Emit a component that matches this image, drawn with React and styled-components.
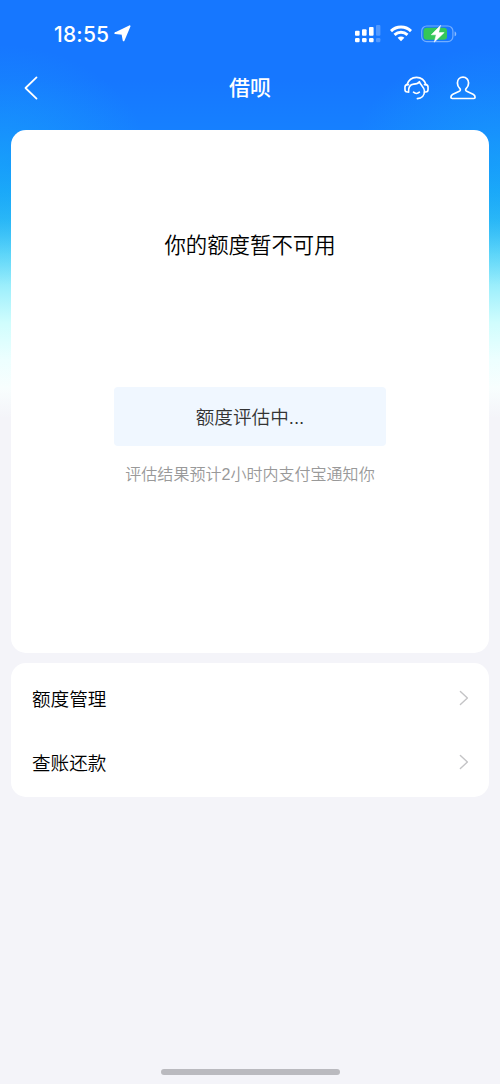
import React from 'react';
import styled, {createGlobalStyle} from 'styled-components';

const GlobalStyle = createGlobalStyle`
  * {
    box-sizing: border-box;
  }

  body {
    margin: 0;
    background: #f4f4f9;
    font-family: 'Liberation Sans', 'Noto Sans CJK SC', sans-serif;
  }
`;

const Screen = styled.div`
  display: flex;
  flex-direction: column;
  height: 1084px;
  overflow: hidden;
  background:
    radial-gradient(ellipse 150px 120px at 0 165px, rgba(24, 168, 250, 0.6), rgba(24, 160, 255, 0)) no-repeat,
    radial-gradient(ellipse 150px 120px at 500px 165px, rgba(24, 168, 250, 0.6), rgba(24, 160, 255, 0)) no-repeat,
    linear-gradient(
      #1677ff 0,
      #1677ff 80px,
      #1680ff 130px,
      #168ffb 165px,
      #1ca8f8 190px,
      #32bef5 220px,
      #6bdef9 255px,
      #a2f0fc 290px,
      #d0fdfd 323px,
      #edffff 360px,
      #f8fefe 388px,
      #f4f4f9 418px
    );
`;

const StatusBar = styled.div`
  display: flex;
  flex: none;
  align-items: center;
  justify-content: space-between;
  height: 67px;
  padding: 0 43px 0 54px;
  color: #fff;
`;

const StatusGroup = styled.div`
  display: flex;
  align-items: center;
  gap: ${({$gap}) => $gap}px;
`;

const Clock = styled.span`
  padding-top: 2px;
  font-family: Inter, sans-serif;
  font-size: 21px;
  font-weight: 500;
  line-height: 26px;
  letter-spacing: 0.2px;
`;

const Icon = styled.svg`
  display: block;
  flex: none;
  fill: none;
  stroke-linecap: round;
  stroke-linejoin: round;
`;

const NavBar = styled.header`
  display: grid;
  flex: none;
  grid-template-columns: 1fr auto 1fr;
  align-items: center;
  height: 42px;
  margin-bottom: 21px;
  padding: 0 24px;
  color: #fff;
`;

const NavTitle = styled.h1`
  margin: 0;
  font-size: 21px;
  font-weight: 500;
  line-height: 30px;
`;

const NavActions = styled.div`
  display: flex;
  justify-content: flex-end;
  gap: 21px;
`;

const Card = styled.section`
  flex: none;
  margin: 0 11px 10px;
  border-radius: 15px;
  background: #fff;
`;

const QuotaCard = styled(Card)`
  display: flex;
  flex-direction: column;
  align-items: center;
  height: 523px;
  padding-top: 99px;
`;

const QuotaTitle = styled.h2`
  margin: 0;
  color: #000;
  font-size: 21.4px;
  font-weight: 350;
  line-height: 34px;
`;

const QuotaButton = styled.button`
  width: 272px;
  height: 59px;
  margin: 124px 0 14px;
  padding: 0 0 2px;
  border: 0;
  border-radius: 4px;
  background: #f0f7ff;
  color: #333;
  font-family: inherit;
  font-size: 18.6px;
  font-weight: 350;
`;

const QuotaHint = styled.p`
  margin: 0;
  color: #999;
  font-size: 16.05px;
  font-weight: 350;
  line-height: 28px;
`;

const MenuCard = styled(Card)`
  height: 134px;
  padding: 3px 20px 0 21px;
`;

const MenuRow = styled.div`
  display: flex;
  align-items: center;
  justify-content: space-between;
  height: 64px;
  color: #000;
  font-size: 18.6px;
  font-weight: 350;
`;

const MenuLabel = styled.span`
  padding-bottom: 2px;
`;

const HomeIndicator = styled.div`
  flex: none;
  align-self: center;
  width: 179px;
  height: 6px;
  margin: auto 0 9px;
  border-radius: 3px;
  background: #bababf;
`;

const LocationIcon = () => <Icon width='17' height='17' viewBox='0 0 17 17'>
  <path d='M15.6 1.2 9.6 15.3 8.4 8.9 1.2 8.2Z' fill='#fff' stroke='#fff' strokeWidth='1.8'/>
</Icon>;

const SignalIcon = () => <Icon width='26' height='18' viewBox='0 0 26 18'>
  <g fill='#fff'>
    <rect x='0' y='5.8' width='4.6' height='5' rx='1'/>
    <rect x='7' y='4.3' width='4.6' height='6.5' rx='1'/>
    <rect x='14' y='2.1' width='4.6' height='8.7' rx='1'/>
    <rect x='0' y='13' width='4.6' height='4.2' rx='1.2'/>
    <rect x='7' y='13' width='4.6' height='4.2' rx='1.2'/>
    <rect x='14' y='13' width='4.6' height='4.2' rx='1.2'/>
  </g>
  <g fill='#fff' opacity='.25'>
    <rect x='21' y='0' width='4.4' height='10.8' rx='1'/>
    <rect x='21' y='13' width='4.4' height='4.2' rx='1.2'/>
  </g>
</Icon>;

const WifiIcon = () => <Icon width='22' height='17' viewBox='0 0 22 17'>
  <g stroke='#fff' strokeWidth='2.9' strokeLinecap='butt'>
    <path d='M1 6.1C6.6.7 15.4.7 21 6.1'/>
    <path d='M4.5 9.9C8.3 6.3 13.7 6.3 17.5 9.9'/>
  </g>
  <path d='M7.6 12.8C9.6 11 12.4 11 14.4 12.8L11 16.2Z' fill='#fff'/>
</Icon>;

const BatteryIcon = () => <Icon width='36' height='20' viewBox='0 0 36 20'>
  <rect x='.7' y='2' width='31.2' height='15.6' rx='5' stroke='#fff' strokeOpacity='.4' strokeWidth='1.2'/>
  <path d='M33.6 7.4c2.2.6 2.2 4.2 0 4.8Z' fill='#fff' fillOpacity='.5'/>
  <rect x='2.5' y='3.8' width='23.5' height='12' rx='3.3' fill='#34c759'/>
  <path
    d='M19.4 1.6 10.2 10.8h5l-2 7.4 10-9.6h-5.4Z'
    fill='#fff'
    stroke='#fff'
    strokeWidth='.5'
  />
</Icon>;

const BackIcon = () => <Icon width='14' height='24' viewBox='0 0 14 24'>
  <path d='M12.5 1.4 1.5 12l11 10.6' stroke='#fff' strokeWidth='1.8'/>
</Icon>;

const ServiceIcon = () => <Icon width='25' height='24' viewBox='0 0 26 24' preserveAspectRatio='none'>
  <g stroke='#fff' strokeWidth='1.7'>
    <path d='M3.2 8.6C4.7 4 8.5 1.3 13 1.3S21.3 4 22.8 8.6'/>
    <path d='M4.7 8.6H3.4C1.8 8.8 1 9.8 1 11.2v2.4c0 1.4.9 2.4 2.4 2.4h1.3'/>
    <path d='M21.3 8.6h1.3c1.6.2 2.4 1.2 2.4 2.6v2.4c0 1.4-.9 2.4-2.4 2.4h-1.3'/>
    <path d='M4.7 16c-.2-4.8 1.6-7.5 5.4-7.8 2.9-.2 4.6-.5 5.9-2.5.6 2.9 5 5 5.3 9.3 0 4.5-2.8 7.6-7.4 7.6'/>
    <path d='M9.9 16.2c1.7 1.5 4.4 1.5 6.1 0'/>
  </g>
</Icon>;

const UserIcon = () => <Icon width='26' height='24' viewBox='0 0 26 24'>
  <path
    d='M13 1.2c-3.3 0-5.6 2.4-5.6 5.7 0 2.4 1 4.3 2.5 5.7.8.8.5 2.2-.6 2.7l-6.4 2.9C1.5 18.9.9 20 .9 21.2c0 .8.5 1.3 1.3 1.3h21.6c.8 0 1.3-.5 1.3-1.3 0-1.2-.6-2.3-2-3l-6.4-2.9c-1.1-.5-1.4-1.9-.6-2.7 1.5-1.4 2.5-3.3 2.5-5.7 0-3.3-2.3-5.7-5.6-5.7Z'
    stroke='#fff'
    strokeWidth='1.7'
  />
</Icon>;

const ArrowIcon = () => <Icon width='10' height='16' viewBox='0 0 10 16'>
  <path d='M1.4 1.5 8.4 8l-7 6.5' stroke='#c4c4c6' strokeWidth='1.4'/>
</Icon>;

const menuItems = ['额度管理', '查账还款'];

const App = () => <>
  <GlobalStyle/>
  <Screen>
    <StatusBar>
      <StatusGroup $gap={5}>
        <Clock>18:55</Clock>
        <LocationIcon/>
      </StatusGroup>
      <StatusGroup $gap={9}>
        <SignalIcon/>
        <WifiIcon/>
        <BatteryIcon/>
      </StatusGroup>
    </StatusBar>
    <NavBar>
      <BackIcon/>
      <NavTitle>借呗</NavTitle>
      <NavActions>
        <ServiceIcon/>
        <UserIcon/>
      </NavActions>
    </NavBar>
    <QuotaCard>
      <QuotaTitle>你的额度暂不可用</QuotaTitle>
      <QuotaButton>额度评估中...</QuotaButton>
      <QuotaHint>评估结果预计2小时内支付宝通知你</QuotaHint>
    </QuotaCard>
    <MenuCard>
      {menuItems.map(item => <MenuRow key={item}>
        <MenuLabel>{item}</MenuLabel>
        <ArrowIcon/>
      </MenuRow>)}
    </MenuCard>
    <HomeIndicator/>
  </Screen>
</>;

export default App;
